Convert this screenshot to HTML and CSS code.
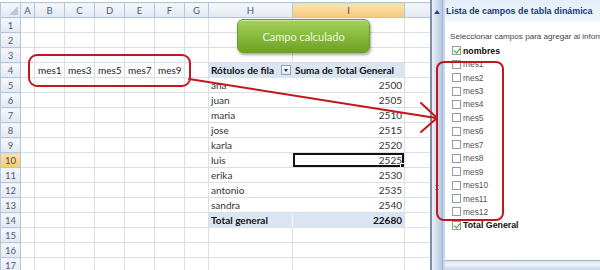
FILE: index.html
```html
<!DOCTYPE html>
<html lang="es">
<head>
<meta charset="utf-8">
<title>Campo calculado</title>
<link rel="stylesheet" href="styles.css">
</head>
<body>
<div class="app">
  <div class="sheet">
    <table class="grid">
      <colgroup>
        <col class="c-rh"><col class="c-a"><col class="c-b"><col class="c-b"><col class="c-b"><col class="c-b"><col class="c-b"><col class="c-g"><col class="c-h"><col class="c-i"><col class="c-j">
      </colgroup>
      <tr class="hdr">
        <th class="corner"><span class="tri"></span></th><th>A</th><th>B</th><th>C</th><th>D</th><th>E</th><th>F</th><th>G</th><th>H</th><th class="sel">I</th><th class="last"></th>
      </tr>
      <tr><th class="rh">1</th><td></td><td></td><td></td><td></td><td></td><td></td><td></td><td></td><td></td><td></td></tr>
      <tr><th class="rh">2</th><td></td><td></td><td></td><td></td><td></td><td></td><td></td><td></td><td></td><td></td></tr>
      <tr><th class="rh">3</th><td></td><td></td><td></td><td></td><td></td><td></td><td></td><td></td><td></td><td></td></tr>
      <tr><th class="rh">4</th><td></td><td class="m">mes1</td><td class="m">mes3</td><td class="m">mes5</td><td class="m">mes7</td><td class="m">mes9</td><td></td>
        <td class="pv ph"><div class="phc"><span>Rótulos de fila</span><span class="dd"></span></div></td><td class="pv ph num-h">Suma de Total General</td><td></td></tr>
      <tr><th class="rh">5</th><td></td><td></td><td></td><td></td><td></td><td></td><td></td><td class="pv">ana</td><td class="pv num">2500</td><td></td></tr>
      <tr><th class="rh">6</th><td></td><td></td><td></td><td></td><td></td><td></td><td></td><td class="pv">juan</td><td class="pv num">2505</td><td></td></tr>
      <tr><th class="rh">7</th><td></td><td></td><td></td><td></td><td></td><td></td><td></td><td class="pv">maria</td><td class="pv num">2510</td><td></td></tr>
      <tr><th class="rh">8</th><td></td><td></td><td></td><td></td><td></td><td></td><td></td><td class="pv">jose</td><td class="pv num">2515</td><td></td></tr>
      <tr><th class="rh">9</th><td></td><td></td><td></td><td></td><td></td><td></td><td></td><td class="pv">karla</td><td class="pv num">2520</td><td></td></tr>
      <tr><th class="rh sel">10</th><td></td><td></td><td></td><td></td><td></td><td></td><td></td><td class="pv">luis</td><td class="pv num active">2525</td><td></td></tr>
      <tr><th class="rh">11</th><td></td><td></td><td></td><td></td><td></td><td></td><td></td><td class="pv">erika</td><td class="pv num">2530</td><td></td></tr>
      <tr><th class="rh">12</th><td></td><td></td><td></td><td></td><td></td><td></td><td></td><td class="pv">antonio</td><td class="pv num">2535</td><td></td></tr>
      <tr><th class="rh">13</th><td></td><td></td><td></td><td></td><td></td><td></td><td></td><td class="pv">sandra</td><td class="pv num">2540</td><td></td></tr>
      <tr><th class="rh">14</th><td></td><td></td><td></td><td></td><td></td><td></td><td></td><td class="pv pt">Total general</td><td class="pv pt num">22680</td><td></td></tr>
      <tr><th class="rh">15</th><td></td><td></td><td></td><td></td><td></td><td></td><td></td><td></td><td></td><td></td></tr>
      <tr><th class="rh">16</th><td></td><td></td><td></td><td></td><td></td><td></td><td></td><td></td><td></td><td></td></tr>
      <tr><th class="rh">17</th><td></td><td></td><td></td><td></td><td></td><td></td><td></td><td></td><td></td><td></td></tr>
    </table>
    <div class="btn">Campo calculado</div>
  </div>
  <div class="split"><span class="up"></span><span class="grip"></span></div>
  <aside class="panel">
    <div class="ptitle">Lista de campos de tabla dinámica</div>
    <div class="pbody">
      <div class="hint">Seleccionar campos para agregar al informe:</div>
      <ul class="fields">
        <li class="on b"><span class="cb"></span>nombres</li>
        <li><span class="cb"></span>mes1</li>
        <li><span class="cb"></span>mes2</li>
        <li><span class="cb"></span>mes3</li>
        <li><span class="cb"></span>mes4</li>
        <li><span class="cb"></span>mes5</li>
        <li><span class="cb"></span>mes6</li>
        <li><span class="cb"></span>mes7</li>
        <li><span class="cb"></span>mes8</li>
        <li><span class="cb"></span>mes9</li>
        <li><span class="cb"></span>mes10</li>
        <li><span class="cb"></span>mes11</li>
        <li><span class="cb"></span>mes12</li>
        <li class="on b"><span class="cb"></span>Total General</li>
      </ul>
    </div>
    <div class="pfoot"></div>
  </aside>
  <svg class="marks" width="600" height="270" viewBox="0 0 600 270">
    <rect x="29" y="55" width="161" height="31" rx="8" />
    <rect x="437" y="62" width="66" height="158" rx="7" />
    <line x1="189" y1="79" x2="436" y2="118" />
    <polyline points="421,103 437,118 421,132" />
  </svg>
</div>
</body>
</html>
```
FILE: styles.css
```css
* { box-sizing: border-box; }
html, body { margin: 0; padding: 0; background: #fff; }
.app {
  position: relative;
  width: 600px;
  height: 270px;
  overflow: hidden;
  display: flex;
  font-family: Lato, "Liberation Sans", sans-serif;
}
.sheet {
  position: relative;
  flex: none;
  padding-top: 2px;
  overflow: hidden;
  border-right: 2px solid #7f8ea3;
  width: 432px;
}
.grid {
  border-collapse: collapse;
  table-layout: fixed;
  width: 430px;
  font-size: 10px;
  color: #222;
}
.c-rh { width: 20px; }
.c-a { width: 14px; }
.c-b { width: 30px; }
.c-g { width: 24px; }
.c-h { width: 84px; }
.c-i { width: 112px; }
.c-j { width: 26px; }
.grid tr { height: 15px; }
.grid td {
  border: 1px solid #d8dfe9;
  padding: 0 2px;
  white-space: nowrap;
  overflow: hidden;
  line-height: 13px;
  height: 15px;
}
.grid th {
  font-weight: normal;
  font-size: 9.5px;
  color: #4d5e78;
  background: linear-gradient(#f4f7fb, #e2e9f3);
  border: 1px solid #b5c6da;
  padding: 0;
  line-height: 13px;
  height: 15px;
  text-align: center;
}
.grid th.sel {
  background: linear-gradient(#fbe3b4, #f7c978);
  color: #4d4a40;
}
.grid th.corner { position: relative; }
.tri {
  position: absolute;
  right: 2px;
  bottom: 2px;
  width: 0; height: 0;
  border-left: 9px solid transparent;
  border-bottom: 9px solid #b9c8da;
}
.grid th.last { border-right: none; }
.m { padding-left: 3px !important; color: #222; }
.pv { border-left-color: #fff !important; border-right-color: #fff !important; color: #333; }
.pv.num { text-align: right; border-right-color: #d8dfe9 !important; }
.ph {
  background: #dbe5f1;
  font-weight: bold;
  color: #111;
  border-color: #dbe5f1 !important;
  padding: 0 1px 0 2px !important;
}
.num-h { text-align: left; }
.phc { display: flex; align-items: center; justify-content: space-between; }
.dd {
  width: 10px; height: 10px;
  border: 1px solid #8ba0bc;
  background: linear-gradient(#fdfdfe, #dfe6ef);
  position: relative;
  flex: none;
}
.dd::after {
  content: "";
  position: absolute;
  left: 2px; top: 3px;
  border-left: 2.5px solid transparent;
  border-right: 2.5px solid transparent;
  border-top: 3px solid #333;
}
.pt {
  background: #dbe5f1;
  font-weight: bold;
  color: #111;
  border-top: 1px solid #95b3d7 !important;
  border-bottom-color: #dbe5f1 !important;
}
.active { position: relative; box-shadow: inset 0 0 0 2px #111; }
.active::after {
  content: "";
  position: absolute;
  right: -2px; bottom: -2px;
  width: 4px; height: 4px;
  background: #111;
  border: 1px solid #fff;
}
.btn {
  position: absolute;
  left: 237px;
  top: 19px;
  width: 133px;
  height: 34px;
  border-radius: 6px;
  background: linear-gradient(#a4d25a, #86bb3c 50%, #6f9f28);
  border: 1px solid #6d9a2e;
  box-shadow: 1px 2px 3px rgba(0,0,0,0.35), inset 0 1px 0 rgba(255,255,255,0.45);
  color: #eef7dc;
  font-size: 11px;
  display: flex;
  align-items: center;
  justify-content: center;
}
.split {
  width: 11px;
  flex: none;
  background: linear-gradient(90deg, #e9f0f9, #c9d8ec 60%, #b6c9e2);
  border-right: 1px solid #9fb6d3;
  position: relative;
}
.up {
  position: absolute;
  left: 2px; top: 10px;
  border-left: 3.5px solid transparent;
  border-right: 3.5px solid transparent;
  border-bottom: 4px solid #2b4a7a;
}
.grip {
  position: absolute;
  left: 3px; top: 185px;
  width: 4px; height: 5px;
  border-top: 1px solid #8aa0bd;
  border-bottom: 1px solid #8aa0bd;
}
.panel {
  flex: 1;
  min-width: 0;
  display: flex;
  flex-direction: column;
  background: #f1f6fc;
  border-left: 2px solid #c7d7ec;
  font-family: "Liberation Sans", Arial, sans-serif;
  overflow: hidden;
}
.ptitle {
  height: 22px;
  padding: 0 0 0 1px;
  display: flex;
  align-items: center;
  font-weight: bold;
  font-size: 8.9px;
  color: #17407a;
  white-space: nowrap;
  background: linear-gradient(#e3ecf8, #f3f7fc);
}
.pbody {
  flex: 1;
  background: #fff;
  padding: 9px 0 0 5px;
  overflow: hidden;
}
.hint {
  font-size: 8.1px;
  color: #444;
  white-space: nowrap;
  height: 11px;
  line-height: 11px;
}
.fields {
  list-style: none;
  margin: 0;
  padding: 2px 0 0 2px;
}
.fields li {
  height: 13.45px;
  display: flex;
  align-items: center;
  gap: 2px;
  font-size: 8.4px;
  color: #555;
}
.fields li.b { font-weight: bold; color: #111; font-size: 8.8px; }
.cb {
  width: 9px; height: 9px;
  border: 1px solid #8f9aab;
  background: #fff;
  flex: none;
  position: relative;
}
.on .cb::after {
  content: "";
  position: absolute;
  left: 2px; top: 0px;
  width: 3px; height: 5px;
  border-right: 1.6px solid #3a9a1e;
  border-bottom: 1.6px solid #3a9a1e;
  transform: rotate(40deg);
}
.pfoot {
  height: 10px;
  border-top: 1px solid #a5b3c6;
  background: linear-gradient(#d7e3f2, #eef3fa 40%, #c7d6ea);
}
.marks {
  position: absolute;
  left: 0; top: 0;
  pointer-events: none;
}
.marks rect, .marks line, .marks polyline {
  fill: none;
  stroke: #c4161c;
  stroke-width: 2;
  stroke-linecap: round;
  stroke-linejoin: round;
}
```
